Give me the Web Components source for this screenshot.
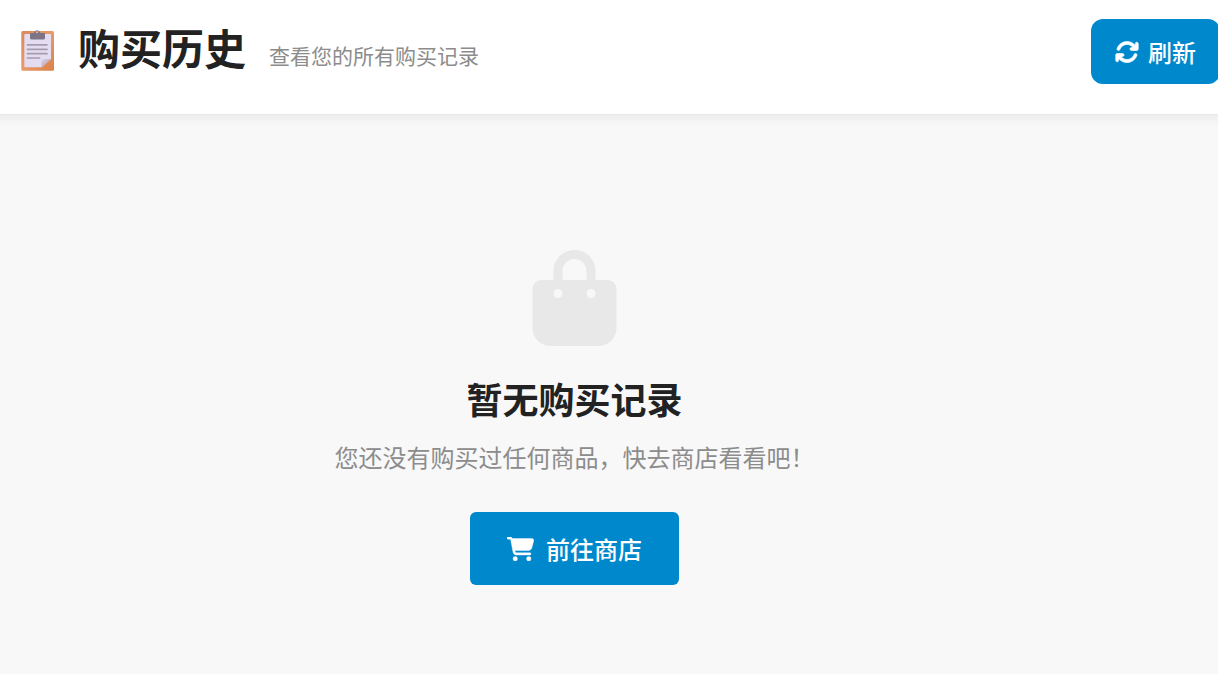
<!DOCTYPE html>
<html lang="zh-CN">
<head>
<meta charset="utf-8">
<meta name="viewport" content="width=device-width, initial-scale=1">
<title>购买历史</title>
<style>
  html, body { margin: 0; min-height: 100%; }
  body {
    background: #f8f8f8;
    color: #222;
    font-family: "Noto Sans CJK SC", "Noto Sans", sans-serif;
    overflow-x: hidden;
  }
</style>
</head>
<body>
<purchase-history></purchase-history>

<script>
const define = (name, html) => {
  const template = document.createElement('template');
  template.innerHTML = html;
  customElements.define(name, class extends HTMLElement {
    constructor() {
      super();
      this.attachShadow({ mode: 'open' }).append(template.content.cloneNode(true));
    }
  });
};

define('clipboard-icon', `
  <style>
    :host { display: block; flex: none; }
    svg { display: block; width: 34px; height: 42px; }
  </style>
  <svg viewBox="0 0 34 42" aria-hidden="true">
    <defs>
      <linearGradient id="board" x1="0" y1="0" x2="1" y2="1">
        <stop offset="0" stop-color="#d98a58"/><stop offset=".5" stop-color="#e89a68"/><stop offset="1" stop-color="#d88248"/>
      </linearGradient>
      <linearGradient id="fold" x1="0" y1="0" x2="1" y2="1">
        <stop offset="0" stop-color="#e0d8ea"/><stop offset=".5" stop-color="#c3b3c8"/>
      </linearGradient>
    </defs>
    <rect x="1.300" y="2" width="32.700" height="39.700" rx="1.500" fill="url(#board)"/>
    <path d="M5.300 5H30a1 1 0 0 1 1 1V30l-9.500 8.300H5.300a1 1 0 0 1-1-1V6a1 1 0 0 1 1-1z" fill="#e4dcf0"/>
    <path d="M21.500 38.300v-5.800a2.500 2.500 0 0 1 2.500-2.500h7z" fill="url(#fold)"/>
    <path d="M10 5a1 1 0 0 1 1-1h3a3.200 3.500 0 0 1 6.200 0H24a1 1 0 0 1 1 1v4a1.500 1.500 0 0 1-1.500 1.500h-12A1.500 1.500 0 0 1 10 9z" fill="#7d7585"/>
    <circle cx="17.100" cy="3.300" r="1" fill="#e6c2b0"/>
    <path d="M7.500 15.800h19.500M7.500 20.300h19.500M7.500 24.700h19.500M7.500 29h12" stroke="#a69cb0" stroke-width="1.700" stroke-linecap="round"/>
  </svg>
`);

define('refresh-icon', `
  <style>
    :host { display: block; flex: none; }
    svg { display: block; width: 24px; height: 24px; fill: currentColor; stroke: currentColor; stroke-width: 14; }
  </style>
  <svg viewBox="0 0 512 512" aria-hidden="true"><path d="M105.1 202.6c7.7-21.8 20.2-42.3 37.800-59.800c62.500-62.500 163.800-62.500 226.300 0L386.300 160H352c-17.700 0-32 14.300-32 32s14.300 32 32 32H463.900c17.700 0 32-14.300 32-32V80c0-17.700-14.300-32-32-32s-32 14.300-32 32v35.200L414.400 97.600c-87.500-87.500-229.300-87.500-316.800 0C73.200 122 55.600 150.700 44.800 181.400c-5.900 16.700 2.900 34.900 19.500 40.800s34.900-2.900 40.800-19.500zM39 289.300c-5 1.500-9.800 4.200-13.700 8.200c-4 4-6.700 8.800-8.100 14c-.3 1.200-.6 2.500-.8 3.800c-.3 1.700-.4 3.400-.4 5.100V432c0 17.700 14.300 32 32 32s32-14.300 32-32V396.900l17.600 17.500c87.500 87.400 229.300 87.400 316.700 0c24.400-24.400 42.100-53.100 52.900-83.700c5.900-16.700-2.900-34.900-19.500-40.800s-34.900 2.900-40.800 19.500c-7.700 21.800-20.200 42.300-37.800 59.800c-62.500 62.500-163.800 62.500-226.300 0l-.1-.1L125.600 352H160c17.700 0 32-14.300 32-32s-14.300-32-32-32H48.400c-1.600 0-3.200 .1-4.800 .3s-3.100 .5-4.600 1z"/></svg>
`);

define('cart-icon', `
  <style>
    :host { display: block; flex: none; }
    svg { display: block; width: 27px; height: 24px; fill: currentColor; stroke: currentColor; stroke-width: 8; }
  </style>
  <svg viewBox="0 0 576 512" aria-hidden="true"><path d="M0 24C0 10.700 10.700 0 24 0H69.500c22 0 41.500 12.800 50.600 32h411c26.300 0 45.500 25 38.600 50.400l-41 152.300c-8.500 31.400-37 53.300-69.500 53.300H170.700l5.400 28.500c2.200 11.300 12.100 19.500 23.600 19.500H488c13.300 0 24 10.700 24 24s-10.700 24-24 24H199.700c-34.600 0-64.300-24.600-70.700-58.500L77.400 54.500c-.7-3.800-4-6.500-7.900-6.500H24C10.700 48 0 37.300 0 24zM128 464a48 48 0 1 1 96 0 48 48 0 1 1 -96 0zm336-48a48 48 0 1 1 0 96 48 48 0 1 1 0-96z"/></svg>
`);

define('bag-icon', `
  <style>
    :host { display: block; color: #e8e8e8; }
    svg { display: block; width: 85px; height: 96px; fill: currentColor; }
  </style>
  <svg viewBox="0 0 448 512" aria-hidden="true"><path d="M160 112c0-35.300 28.700-64 64-64s64 28.700 64 64v48H160V112zm-48 48H48c-26.500 0-48 21.500-48 48V416c0 53 43 96 96 96H352c53 0 96-43 96-96V208c0-26.500-21.500-48-48-48H336V112C336 50.100 285.900 0 224 0S112 50.100 112 112v48zm24 48a24 24 0 1 1 0 48 24 24 0 1 1 0-48zm152 24a24 24 0 1 1 48 0 24 24 0 1 1 -48 0z"/></svg>
`);

define('action-button', `
  <style>
    :host { display: inline-block; flex: none; }
    button {
      display: flex; align-items: center; justify-content: center;
      gap: var(--gap, 12px);
      padding: var(--padding, 18px 36px);
      border: 0; border-radius: var(--radius, 6px);
      background: #0088cc; color: #fff;
      font: 500 24px/36px "Noto Sans CJK SC", "Noto Sans", sans-serif;
      white-space: nowrap; cursor: pointer;
    }
    button:hover { background: #007ab8; }
  </style>
  <button type="button"><slot name="icon"></slot><span><slot></slot></span></button>
`);

define('page-header', `
  <style>
    :host {
      display: flex; align-items: flex-start; justify-content: space-between;
      box-sizing: border-box; padding: 19px 0 30px 20px;
      background: #fff; border-bottom: 1px solid #e8e8e8;
      box-shadow: 0 -9px 12px 12px rgba(0, 0, 0, .06);
    }
    .heading { display: flex; align-items: center; min-width: 0; }
    clipboard-icon { margin-top: 6px; }
    h1 { margin: 0 23px 0 24px; font-size: 42px; line-height: 56px; font-weight: 700; white-space: nowrap; }
    p { margin: 0; padding-top: 16px; font-size: 21px; line-height: 32px; color: #8c8c8c; }
    action-button { --gap: 9px; --padding: 15px 24px 14px; --radius: 12px; margin-right: -2px; }
  </style>
  <div class="heading">
    <clipboard-icon></clipboard-icon>
    <h1><slot name="title"></slot></h1>
    <p><slot name="subtitle"></slot></p>
  </div>
  <action-button><refresh-icon slot="icon"></refresh-icon>刷新</action-button>
`);

define('empty-state', `
  <style>
    :host { display: flex; flex-direction: column; align-items: center; text-align: center; }
    h2 { margin: 25px 0 0; font-size: 36px; line-height: 54px; font-weight: 700; }
    p { margin: 14px 0 37px; font-size: 24px; line-height: 36px; color: #8c8c8c; }
  </style>
  <bag-icon></bag-icon>
  <h2><slot name="title"></slot></h2>
  <p><slot name="text"></slot></p>
  <slot name="action"></slot>
`);

define('purchase-history', `
  <style>
    :host { display: block; }
    main { padding: 135px 69px 89px 0; }
    action-button { --padding: 19px 37px 18px; }
  </style>
  <page-header>
    <span slot="title">购买历史</span>
    <span slot="subtitle">查看您的所有购买记录</span>
  </page-header>
  <main>
    <empty-state>
      <span slot="title">暂无购买记录</span>
      <span slot="text">您还没有购买过任何商品，快去商店看看吧！</span>
      <action-button slot="action"><cart-icon slot="icon"></cart-icon>前往商店</action-button>
    </empty-state>
  </main>
`);
</script>
</body>
</html>
